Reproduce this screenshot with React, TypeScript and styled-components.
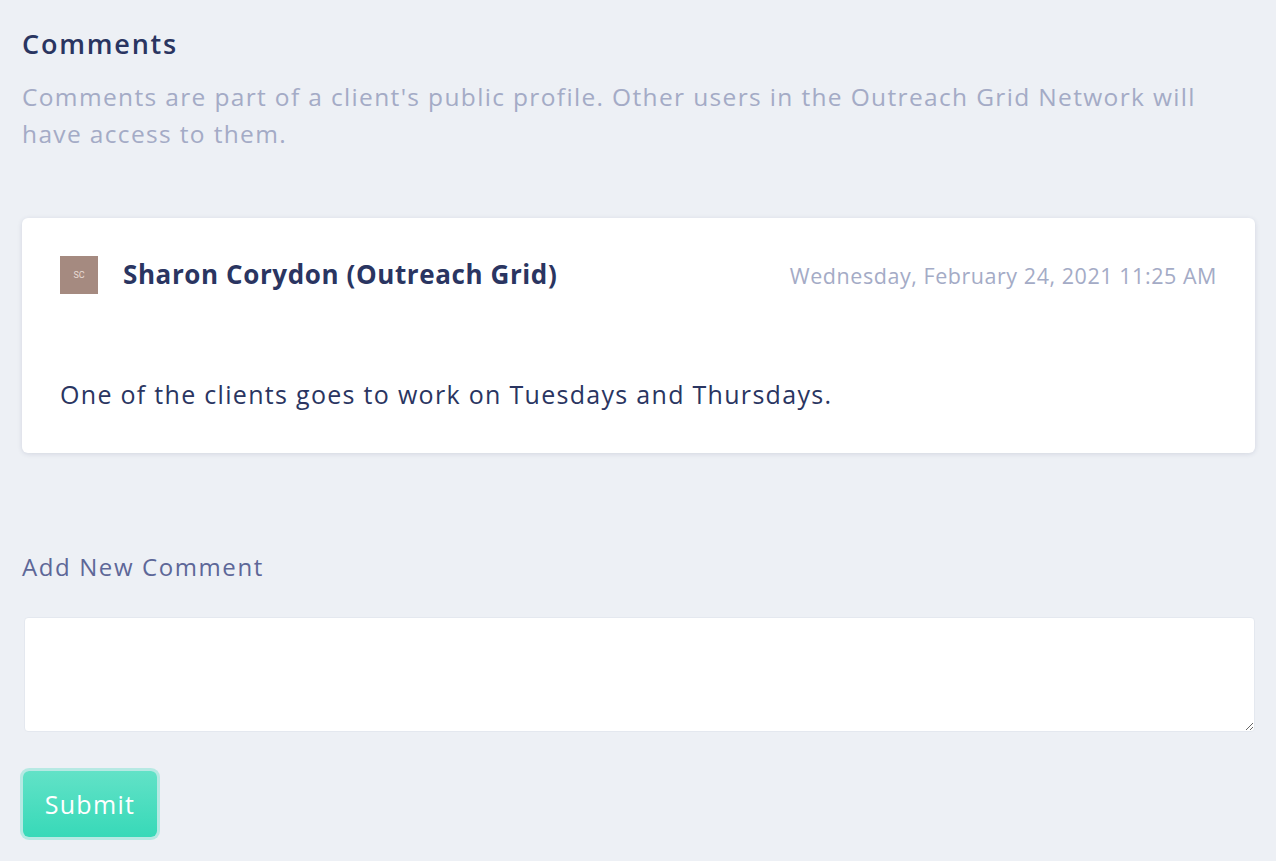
import React from 'react'
import styled, { createGlobalStyle } from 'styled-components'

const GlobalStyle = createGlobalStyle`
  html, body {
    margin: 0;
    padding: 0;
    background: #edf0f5;
  }
  body {
    font-family: 'Open Sans', 'Liberation Sans', sans-serif;
  }
`

const Page = styled.div`
  padding: 26px 21px 20px 22px;
  box-sizing: border-box;
  min-height: 861px;
`

const Title = styled.h2`
  margin: 0;
  font-size: 27px;
  font-weight: 600;
  line-height: 36px;
  letter-spacing: 1.8px;
  color: #2a3561;
`

const Description = styled.p`
  margin: 16px 0 0;
  font-size: 24.5px;
  line-height: 37px;
  letter-spacing: 1.35px;
  color: #a4abc6;
  max-width: 1200px;
`

const Card = styled.div`
  margin-top: 66px;
  background: #ffffff;
  border-radius: 6px;
  box-shadow: 0 1px 5px rgba(40, 50, 90, 0.13);
  padding: 38px;
  box-sizing: border-box;
  height: 235px;
`

const CardHeader = styled.div`
  display: flex;
  align-items: center;
`

const Avatar = styled.div`
  width: 38px;
  height: 38px;
  background: #a58a80;
  color: #e8dad4;
  font-family: 'Roboto', sans-serif;
  font-size: 9px;
  display: flex;
  align-items: center;
  justify-content: center;
  flex-shrink: 0;
`

const Author = styled.div`
  margin: -3px 0 0 25px;
  font-size: 26px;
  font-weight: 700;
  letter-spacing: 0.6px;
  color: #2a3561;
`

const Timestamp = styled.div`
  margin-left: auto;
  font-size: 21.5px;
  letter-spacing: 0.55px;
  color: #a4abc6;
`

const Body = styled.p`
  margin: 85px 0 0;
  font-size: 25px;
  line-height: 30px;
  letter-spacing: 1.3px;
  color: #2a3561;
`

const Label = styled.div`
  margin-top: 99px;
  font-size: 24px;
  line-height: 30px;
  letter-spacing: 1.6px;
  color: #5d6798;
`

const TextArea = styled.textarea`
  display: block;
  margin: 35px 0 0 2px;
  width: calc(100% - 2px);
  height: 115px;
  box-sizing: border-box;
  border: 1px solid #e4e8ef;
  border-radius: 4px;
  background: #ffffff;
  resize: vertical;
  font-family: inherit;
  font-size: 20px;
  outline: none;
`

const SubmitButton = styled.button`
  display: block;
  margin: 39px 0 0 1px;
  width: 134px;
  height: 66px;
  border: none;
  border-radius: 6px;
  background: linear-gradient(180deg, #62e2c7 0%, #37d9b8 100%);
  box-shadow: 0 0 0 3px rgba(55, 217, 184, 0.3);
  color: #ffffff;
  font-family: inherit;
  font-size: 25px;
  letter-spacing: 1.3px;
  cursor: pointer;
`

export default function App() {
  return (
    <>
      <GlobalStyle />
      <Page>
        <Title>Comments</Title>
        <Description>
          Comments are part of a client's public profile. Other users in the Outreach Grid Network will have access to them.
        </Description>
        <Card>
          <CardHeader>
            <Avatar>SC</Avatar>
            <Author>Sharon Corydon (Outreach Grid)</Author>
            <Timestamp>Wednesday, February 24, 2021 11:25 AM</Timestamp>
          </CardHeader>
          <Body>One of the clients goes to work on Tuesdays and Thursdays.</Body>
        </Card>
        <Label>Add New Comment</Label>
        <TextArea />
        <SubmitButton>Submit</SubmitButton>
      </Page>
    </>
  )
}
